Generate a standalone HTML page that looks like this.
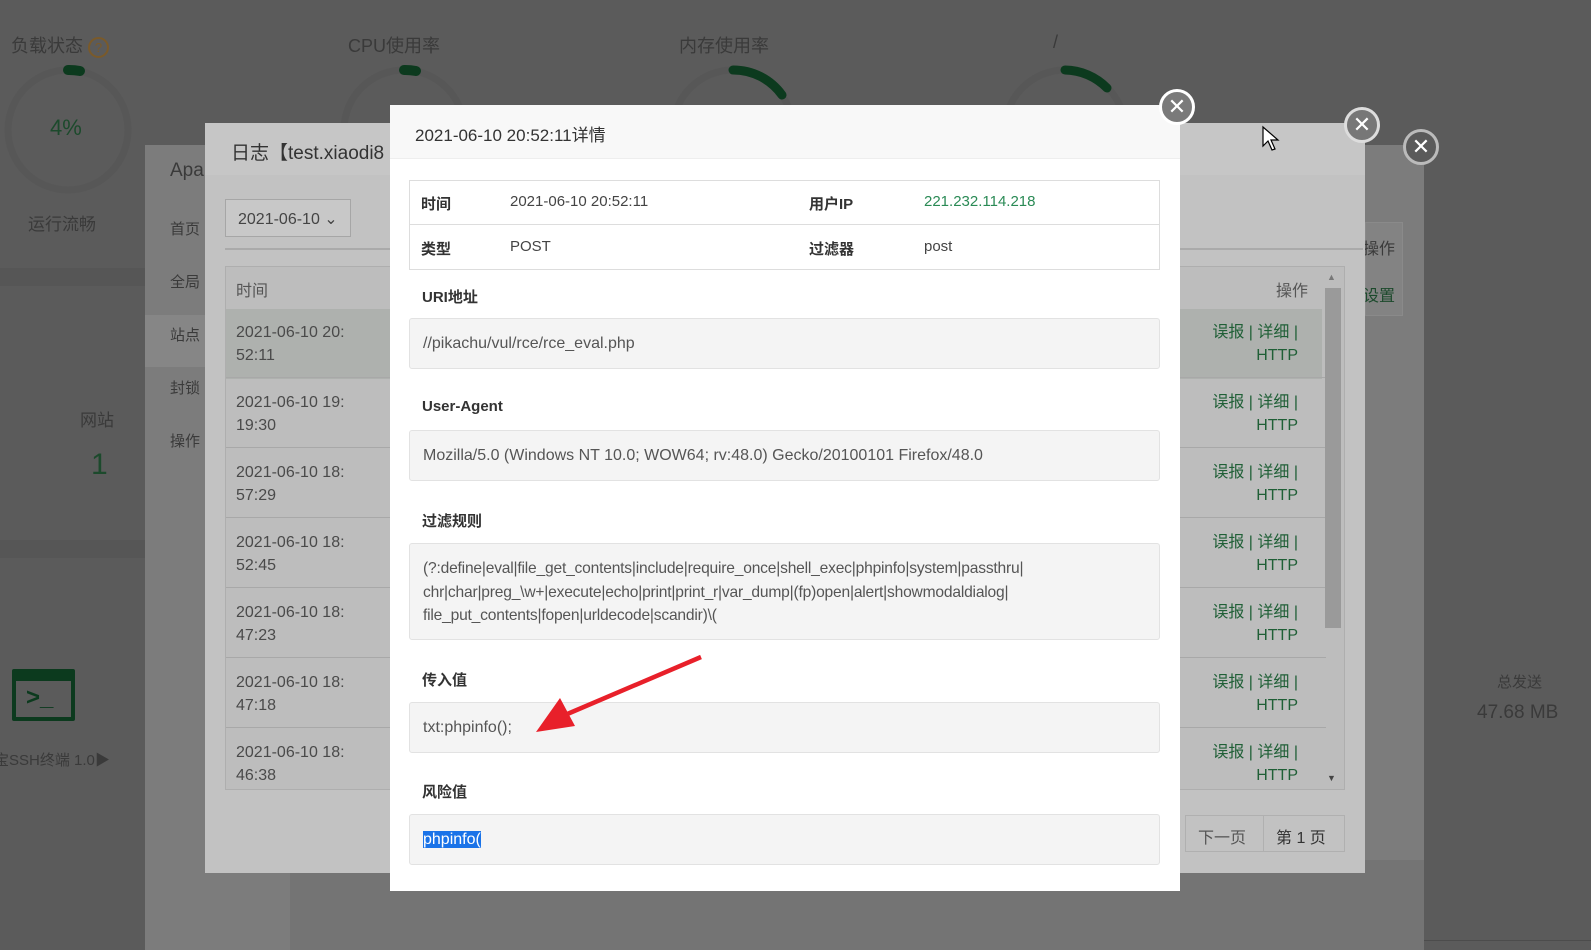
<!DOCTYPE html>
<html><head><meta charset="utf-8"><style>
*{margin:0;padding:0;box-sizing:border-box}
body{width:1591px;height:950px;overflow:hidden;background:#5b5b5b;font-family:"Liberation Sans","Noto Sans CJK SC",sans-serif;position:relative;color:#333}
.a{position:absolute;white-space:nowrap}
.dim{color:#3a3a3a}
.lbl{font-weight:bold;font-size:15px;color:#333}
.box{position:absolute;left:409px;width:751px;background:#f4f4f4;border:1px solid #e2e2e2;border-radius:3px;font-size:16px;color:#555;padding-left:13px}
.close{position:absolute;width:36px;height:36px;border-radius:50%;border:3px solid #fff;color:#fff;font-size:22px;line-height:29px;text-align:center}
.row{position:absolute;left:226px;width:1100px;height:69px;border-bottom:1px solid #a8a8a8;font-size:16px;color:#4a4a4a}
.row .t{position:absolute;left:10px;top:12px;line-height:23px}
.row .o{position:absolute;right:28px;top:12px;line-height:23px;text-align:right;color:#1f5f36}
</style></head><body>
<!-- dashboard background -->
<div class="a dim" style="left:11px;top:32px;font-size:18px">负载状态 <span style="display:inline-block;width:21px;height:21px;border:2px solid #7a5a2a;border-radius:50%;color:#7a5a2a;font-size:13px;text-align:center;line-height:17px">?</span></div>
<div class="a dim" style="left:348px;top:32px;font-size:18px">CPU使用率</div>
<div class="a dim" style="left:679px;top:32px;font-size:18px">内存使用率</div>
<div class="a dim" style="left:1053px;top:32px;font-size:18px">/</div>
<svg class="a" style="left:0;top:0" width="1591" height="300">
<g fill="none" stroke-width="7" stroke-linecap="round">
<circle cx="68" cy="130" r="60" stroke="#575757"/>
<circle cx="404" cy="130" r="60" stroke="#575757"/>
<circle cx="733" cy="130" r="60" stroke="#575757"/>
<circle cx="1065" cy="130" r="60" stroke="#575757"/>
<path d="M68 70 A60 60 0 0 1 80 71" stroke="#0c3a1e" stroke-width="10"/>
<path d="M404 70 A60 60 0 0 1 416 71" stroke="#0c3a1e" stroke-width="10"/>
<path d="M733 70 A60 60 0 0 1 782 95" stroke="#0c3a1e" stroke-width="9"/>
<path d="M1065 70 A60 60 0 0 1 1107 88" stroke="#0c3a1e" stroke-width="9"/>
</g></svg>
<div class="a" style="left:50px;top:115px;font-size:22px;color:#1c4a2c">4%</div>
<div class="a dim" style="left:28px;top:210px;font-size:17px">运行流畅</div>
<div class="a" style="left:0;top:268px;width:145px;height:18px;background:#565656"></div>
<div class="a dim" style="left:80px;top:406px;font-size:17px">网站</div>
<div class="a" style="left:91px;top:448px;font-size:30px;color:#1c4a2c">1</div>
<div class="a" style="left:0;top:540px;width:145px;height:18px;background:#565656"></div>
<div class="a" style="left:12px;top:669px;width:63px;height:52px;border:4px solid #0c3a1e;border-top-width:12px;border-radius:2px"></div>
<div class="a" style="left:26px;top:684px;font-size:24px;color:#0c3a1e;font-weight:bold">&gt;_</div>
<div class="a dim" style="left:-6px;top:749px;font-size:15px">宝SSH终端 1.0▶</div>
<div class="a dim" style="left:1497px;top:671px;font-size:15px">总发送</div>
<div class="a dim" style="left:1477px;top:702px;font-size:19px">47.68 MB</div>
<div class="a" style="left:1424px;top:940px;width:167px;height:1px;background:#4c4c4c"></div>

<!-- Apa panel -->
<div class="a" style="left:145px;top:145px;width:1279px;height:805px;background:#7c7c7c"></div>
<div class="a" style="left:290px;top:860px;width:1134px;height:90px;background:#747474"></div>
<div class="a dim" style="left:170px;top:160px;font-size:19px">Apa</div>
<div class="a" style="left:145px;top:315px;width:60px;height:52px;background:#868686"></div>
<div class="a dim" style="left:170px;top:218px;font-size:15px">首页</div>
<div class="a dim" style="left:170px;top:271px;font-size:15px">全局</div>
<div class="a dim" style="left:170px;top:324px;font-size:15px">站点</div>
<div class="a dim" style="left:170px;top:377px;font-size:15px">封锁</div>
<div class="a dim" style="left:170px;top:430px;font-size:15px">操作</div>
<div class="a" style="left:1365px;top:222px;width:38px;height:94px;border:1px solid #8a8a8a;background:#838383"></div>
<div class="a dim" style="left:1363px;top:235px;font-size:16px">操作</div>
<div class="a" style="left:1363px;top:282px;font-size:16px;color:#1c4a2c">设置</div>

<!-- log panel -->
<div class="a" style="left:205px;top:123px;width:1160px;height:750px;background:#c2c2c2"></div>
<div class="a" style="left:205px;top:123px;width:1160px;height:52px;background:#c6c6c6"></div>
<div class="a" style="left:231px;top:138px;font-size:19px;color:#333">日志【test.xiaodi8</div>
<div class="a" style="left:225px;top:199px;width:126px;height:38px;border:1px solid #a6a6a6;background:#c8c8c8;font-size:16px;color:#444;padding:9px 0 0 12px">2021-06-10 ⌄</div>
<div class="a" style="left:225px;top:248px;width:1138px;height:2px;background:#aaa"></div>
<div class="a" style="left:225px;top:266px;width:1120px;height:524px;border:1px solid #aeaeae;background:#bdbdbd"></div>
<div class="a" style="left:236px;top:277px;font-size:16px;color:#555">时间</div>
<div class="a" style="left:1276px;top:277px;font-size:16px;color:#555">操作</div>
<div class="a" style="left:226px;top:309px;width:1096px;height:70px;background:#aeb1ae"></div>
<div class="row" style="top:309px"><div class="t">2021-06-10 20:<br>52:11</div><div class="o">误报 | 详细 |<br>HTTP</div></div>
<div class="row" style="top:379px"><div class="t">2021-06-10 19:<br>19:30</div><div class="o">误报 | 详细 |<br>HTTP</div></div>
<div class="row" style="top:449px"><div class="t">2021-06-10 18:<br>57:29</div><div class="o">误报 | 详细 |<br>HTTP</div></div>
<div class="row" style="top:519px"><div class="t">2021-06-10 18:<br>52:45</div><div class="o">误报 | 详细 |<br>HTTP</div></div>
<div class="row" style="top:589px"><div class="t">2021-06-10 18:<br>47:23</div><div class="o">误报 | 详细 |<br>HTTP</div></div>
<div class="row" style="top:659px"><div class="t">2021-06-10 18:<br>47:18</div><div class="o">误报 | 详细 |<br>HTTP</div></div>
<div class="row" style="top:729px;border:none"><div class="t">2021-06-10 18:<br>46:38</div><div class="o">误报 | 详细 |<br>HTTP</div></div>
<div class="a" style="left:1325px;top:288px;width:16px;height:340px;background:#9a9a9a"></div>
<div class="a" style="left:1327px;top:272px;font-size:9px;color:#777">▲</div>
<div class="a" style="left:1327px;top:773px;font-size:9px;color:#444">▼</div>
<div class="a" style="left:1185px;top:815px;width:160px;height:37px;border:1px solid #b0b0b0;background:#c2c2c2"></div>
<div class="a" style="left:1263px;top:815px;width:1px;height:37px;background:#b0b0b0"></div>
<div class="a" style="left:1198px;top:824px;font-size:16px;color:#555">下一页</div>
<div class="a" style="left:1276px;top:824px;font-size:16px;color:#333">第 1 页</div>
<svg class="a" style="left:1261px;top:125px" width="20" height="28"><path d="M2 2 L2 21 L7 16 L11 25 L14 24 L10 15 L17 15 Z" fill="#fff" stroke="#000" stroke-width="1.2"/></svg>

<div class="close" style="left:1403px;top:129px;background:#5a5a5a;border-color:#bbb">✕</div>
<div class="close" style="left:1344px;top:107px;background:#777;border-color:#ddd">✕</div>

<!-- main modal -->
<div class="a" style="left:390px;top:105px;width:790px;height:786px;background:#fff"></div>
<div class="a" style="left:390px;top:105px;width:790px;height:54px;background:#f8f8f8;border-bottom:1px solid #eee"></div>
<div class="a" style="left:415px;top:121px;font-size:17px;color:#333">2021-06-10 20:52:11详情</div>
<div class="close" style="left:1159px;top:89px;background:#7a7a7a">✕</div>

<div class="a" style="left:409px;top:180px;width:751px;height:90px;border:1px solid #ddd"></div>
<div class="a" style="left:409px;top:224px;width:751px;height:1px;background:#ddd"></div>
<div class="a lbl" style="left:421px;top:193px">时间</div>
<div class="a" style="left:510px;top:193px;font-size:15px;color:#444">2021-06-10 20:52:11</div>
<div class="a lbl" style="left:809px;top:193px">用户IP</div>
<div class="a" style="left:924px;top:193px;font-size:15px;color:#2a8a55">221.232.114.218</div>
<div class="a lbl" style="left:421px;top:238px">类型</div>
<div class="a" style="left:510px;top:238px;font-size:15px;color:#444">POST</div>
<div class="a lbl" style="left:809px;top:238px">过滤器</div>
<div class="a" style="left:924px;top:238px;font-size:15px;color:#444">post</div>

<div class="a lbl" style="left:422px;top:286px">URI地址</div>
<div class="box" style="top:318px;height:51px;line-height:49px">//pikachu/vul/rce/rce_eval.php</div>
<div class="a lbl" style="left:422px;top:398px">User-Agent</div>
<div class="box" style="top:430px;height:51px;line-height:49px">Mozilla/5.0 (Windows NT 10.0; WOW64; rv:48.0) Gecko/20100101 Firefox/48.0</div>
<div class="a lbl" style="left:422px;top:510px">过滤规则</div>
<div class="box" style="top:543px;height:97px;padding-top:13px;line-height:23.5px;white-space:nowrap;font-size:15.6px;letter-spacing:-0.2px">(?:define|eval|file_get_contents|include|require_once|shell_exec|phpinfo|system|passthru|<br>chr|char|preg_\w+|execute|echo|print|print_r|var_dump|(fp)open|alert|showmodaldialog|<br>file_put_contents|fopen|urldecode|scandir)\(</div>
<div class="a lbl" style="left:422px;top:669px">传入值</div>
<div class="box" style="top:702px;height:51px;line-height:49px">txt:phpinfo();</div>
<div class="a lbl" style="left:422px;top:781px">风险值</div>
<div class="box" style="top:814px;height:51px;line-height:49px"><span style="background:#1a73e8;color:#fff">phpinfo(</span></div>

<svg class="a" style="left:0;top:0" width="1591" height="950">
<line x1="701" y1="657" x2="565" y2="715" stroke="#e8202a" stroke-width="4.5"/>
<polygon points="536,732 560,698 575,726" fill="#e8202a"/>
</svg>
</body></html>
